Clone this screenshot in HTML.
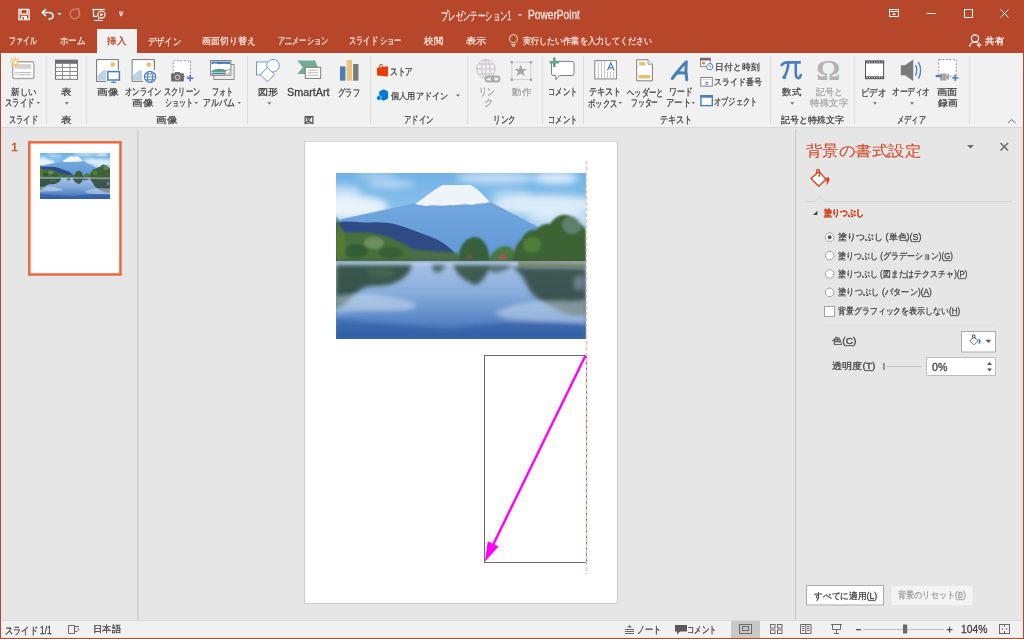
<!DOCTYPE html>
<html><head><meta charset="utf-8">
<style>
html,body{margin:0;padding:0;width:1024px;height:639px;overflow:hidden;background:#E6E6E6}
body{font-family:"Liberation Sans",sans-serif;position:relative}
.b{position:absolute}
.t{position:absolute;white-space:nowrap;transform-origin:0 0;-webkit-text-stroke:0.3px currentColor}
svg.ov{position:absolute;left:0;top:0}
</style></head><body>
<svg class="ov" width="1024" height="639" viewBox="0 0 1024 639">
<defs>
<filter id="bl1" x="-20%" y="-20%" width="140%" height="140%"><feGaussianBlur stdDeviation="1"/></filter>
<filter id="bl2" x="-30%" y="-30%" width="160%" height="160%"><feGaussianBlur stdDeviation="2"/></filter>
<filter id="bl3" x="-30%" y="-30%" width="160%" height="160%"><feGaussianBlur stdDeviation="3.5"/></filter>
<filter id="bl05"><feGaussianBlur stdDeviation="0.6"/></filter>
<linearGradient id="sky" x1="0" y1="0" x2="0" y2="1">
<stop offset="0" stop-color="#70B2E7"/><stop offset="0.5" stop-color="#90C3EC"/><stop offset="1" stop-color="#B2D4F0"/>
</linearGradient>
<linearGradient id="fuji" x1="0" y1="0" x2="0" y2="1">
<stop offset="0" stop-color="#78ACE0"/><stop offset="1" stop-color="#5E97D6"/>
</linearGradient>
<linearGradient id="water" x1="0" y1="0" x2="0" y2="1">
<stop offset="0" stop-color="#A8C3E7"/><stop offset="0.4" stop-color="#8AADDC"/><stop offset="0.72" stop-color="#5E8BC9"/><stop offset="1" stop-color="#3A67AE"/>
</linearGradient>
<clipPath id="pc"><rect x="0" y="0" width="250" height="166"/></clipPath>
<g id="photo" clip-path="url(#pc)">
<rect x="0" y="0" width="250" height="92" fill="url(#sky)"/>
<g filter="url(#bl3)" fill="#fff">
<ellipse cx="12" cy="34" rx="40" ry="12" opacity="0.8"/>
<ellipse cx="5" cy="18" rx="20" ry="6" opacity="0.5"/>
<ellipse cx="55" cy="11" rx="24" ry="3" opacity="0.6"/>
<ellipse cx="40" cy="3" rx="20" ry="2.5" opacity="0.5"/>
<ellipse cx="160" cy="5" rx="40" ry="6" opacity="0.55"/>
<ellipse cx="220" cy="5" rx="22" ry="6" opacity="0.75"/>
<ellipse cx="210" cy="32" rx="55" ry="10" opacity="0.7"/>
<ellipse cx="225" cy="46" rx="35" ry="6" opacity="0.55"/>
<ellipse cx="175" cy="22" rx="20" ry="5" opacity="0.4"/>
</g>
<path d="M0,49 L6,46 L80,30 C92,22 100,15 107,12.5 L135,12.5 C142,16 148,23 153,28.6 C168,36 190,48 210,58 L250,72 L250,92 L0,92 Z" fill="url(#fuji)" filter="url(#bl05)"/>
<path d="M79,31 C92,22 100,15 107,12 L135,12 C142,16 148,23 154,29 C148,31 142,30 136,32 C128,30 122,33 114,32 C106,34 98,31 90,33 C86,32 82,32 79,31 Z" fill="#EFF4F9" filter="url(#bl05)"/>
<path d="M0,50 L7,48.5 C15,48 25,49.5 35,49.5 C45,49 52,50 58,51 C70,54 85,60 100,66 C108,70 113,74 118,79 L118,92 L0,92 Z" fill="#2E4C86" filter="url(#bl05)"/>
<g filter="url(#bl1)">
<path d="M0,43 C3,48 5,54 7,59 C15,60 28,59 36,60 C42,61 46,62 49,63 C56,65 62,68 66,70 C70,72 74,74 77,76.5 L100,78.5 L100,91 L0,91 Z" fill="#46703C"/>
<ellipse cx="38" cy="70" rx="10" ry="6" fill="#8FAA78" opacity="0.55"/>
<ellipse cx="20" cy="78" rx="12" ry="7" fill="#2F5530" opacity="0.7"/>
<ellipse cx="55" cy="80" rx="12" ry="6" fill="#2E5232" opacity="0.6"/>
<ellipse cx="4" cy="72" rx="6" ry="16" fill="#5E7E38" opacity="0.7"/>
<path d="M72,80 C85,78 105,78 122,80 L122,91 L72,91 Z" fill="#4A6E48"/>
<path d="M122,90 C122,76 128,65 138,64 C148,64 153,74 154,90 Z" fill="#35603A"/>
<path d="M152,90 C154,80 162,73 170,73 C177,73 180,82 180,90 Z" fill="#4B7744"/>
<path d="M176,92 C177,80 180,70 186,66 C188,60 194,56 200,57 C204,52 210,50 214,51 C218,45 224,41 230,42 C236,42 241,46 243,50 C247,52 250,56 250,60 L250,94 Z" fill="#3D6434"/>
<ellipse cx="196" cy="72" rx="9" ry="8" fill="#5E8A3A" opacity="0.6"/>
<ellipse cx="236" cy="52" rx="10" ry="9" fill="#7F9DA0" opacity="0.5"/>
<ellipse cx="167" cy="84" rx="3" ry="2.5" fill="#B44A55"/>
<ellipse cx="133" cy="84" rx="3" ry="2" fill="#A85050" opacity="0.6"/>
</g>
<rect x="0" y="88" width="250" height="78" fill="url(#water)"/>
<g filter="url(#bl1)">
<rect x="0" y="87" width="250" height="1.5" fill="#3A5536" opacity="0.7"/>
<path d="M0,89 L182,89 L182,92.5 L0,92.5 Z" fill="#C2D5EC" opacity="0.55"/>
<path d="M182,89 L250,90 L250,95 L182,94 Z" fill="#7A8A55" opacity="0.8"/>
</g>
<g filter="url(#bl2)">
<path d="M0,92 L76,92 C74,100 68,106 58,110 C48,114 40,112 30,114 C20,118 14,126 6,134 L0,136 Z" fill="#2F4A3C" opacity="0.9"/>
<ellipse cx="45" cy="100" rx="14" ry="5" fill="#4D6E4C" opacity="0.6"/>
<path d="M96,92 L110,92 C108,96 104,100 100,100 C97,98 96,95 96,92 Z" fill="#3A5448" opacity="0.8"/>
<path d="M117,92 L154,92 C152,100 148,108 140,112 C132,110 124,104 120,98 Z" fill="#2E4A3A" opacity="0.85"/>
<path d="M176,94 L250,95 L250,142 C240,144 232,142 224,138 C212,132 200,126 194,118 C190,110 186,100 176,94 Z" fill="#2D4738" opacity="0.85"/>
<ellipse cx="243" cy="110" rx="5" ry="7" fill="#9FB6D2" opacity="0.45"/>
<path d="M150,92 L176,92 C172,97 166,99 158,100 C154,98 151,96 150,92 Z" fill="#33503E" opacity="0.7"/>
</g>
<g filter="url(#bl2)">
<path d="M0,123 C25,119 50,121 75,129 C85,133 80,137 60,138 C35,139 15,137 0,141 Z" fill="#DCE8F4" opacity="0.45"/>
<path d="M158,140 C175,130 205,126 235,128 L250,127 L250,150 C230,150 200,148 170,146 Z" fill="#DCE8F4" opacity="0.45"/>
<path d="M0,146 C40,150 90,154 117,156 C150,150 200,146 250,150 L250,166 L0,166 Z" fill="#2A569E" opacity="0.55"/>
</g>
</g>
</defs>
<!-- backgrounds -->
<rect x="0" y="0" width="1024" height="53" fill="#B7472A"/>
<rect x="97" y="29" width="40" height="24" fill="#F1F1F1"/>
<rect x="0" y="53" width="1024" height="74" fill="#F1F1F1"/>
<rect x="0" y="127" width="1024" height="1" fill="#D8D8D8"/>
<rect x="0" y="620" width="1024" height="1" fill="#DADADA"/>
<rect x="0" y="621" width="1024" height="17" fill="#F1F1F1"/>
<rect x="0" y="638" width="1024" height="1" fill="#B7472A"/>
<rect x="0" y="0" width="1" height="639" fill="#B7472A"/>
<rect x="1023" y="0" width="1" height="639" fill="#B7472A"/>

<!-- QAT icons -->
<g fill="none" stroke="#FFFFFF" stroke-width="1.3">
<path d="M19,9.3 H28.6 L29.1,9.8 V19.5 H19 Z"/>
<path d="M20.9,9.5 V14.1 H27.2 V9.5"/>
</g>
<rect x="21.2" y="15.8" width="5.8" height="3.8" fill="#fff"/>
<rect x="22.4" y="17.2" width="1.7" height="2.4" fill="#B7472A"/>
<g fill="none" stroke="#FFFFFF" stroke-width="1.6" stroke-linecap="round">
<path d="M43,12.5 H48.5 C51.5,12.5 53,14 53,16 C53,18 51.5,19 49,19"/>
<path d="M45.5,9.5 L42.3,12.5 L45.5,15.5"/>
</g>
<path d="M57.5,13 H61.5 L59.5,15.3 Z" fill="#fff"/>
<g fill="none" stroke="#FFFFFF" stroke-width="1.5" opacity="0.3">
<path d="M78.5,11 A4.8,4.8 0 1 1 74.6,9.2"/>
<path d="M74.5,9 H78.8 V13"/>
</g>
<g fill="none" stroke="#FFFFFF" stroke-width="1.2">
<path d="M92,9.5 H105"/>
<path d="M93.5,10 V16.3 H97"/>
<circle cx="101.4" cy="14.6" r="3.6"/>
<path d="M98.5,18 L98.5,19.5 M94,20.5 H103"/>
</g>
<path d="M100.3,12.8 L103.2,14.6 L100.3,16.4 Z" fill="#fff"/>
<rect x="119" y="11.6" width="4.3" height="1" fill="#fff"/>
<path d="M119,13.6 H123.3 L121.15,16.6 Z" fill="#fff"/>
<!-- window controls -->
<g fill="none" stroke="#FFFFFF" stroke-width="1">
<rect x="889.5" y="9.5" width="9" height="7"/>
<path d="M890,11.5 H898"/>
<path d="M926.5,13.5 H935.5"/>
<rect x="964.5" y="9.5" width="8" height="8"/>
<path d="M1000.5,9.5 L1008.5,17.5 M1008.5,9.5 L1000.5,17.5"/>
</g>
<path d="M892,15 L894,12.5 L896,15 Z" fill="#fff"/>
<g fill="none" stroke="#FFFFFF" stroke-width="1.2">
<circle cx="975" cy="38.5" r="3.6"/>
<path d="M969.5,47 C970,43.5 972,42 975,42 C976,42 977,42.2 977.8,42.6"/>
<path d="M979,42.5 V47.5 M976.5,45 H981.5"/>
</g>
<!-- bulb -->
<g fill="none" stroke="#F6E3DE" stroke-width="1">
<path d="M511,42.5 C510,41 509.5,40 509.5,38.5 A3.9,3.9 0 0 1 517.3,38.5 C517.3,40 516.8,41 515.8,42.5 Z"/>
<path d="M511.3,44.5 H515.5 M511.8,46 H515"/>
</g>

<!-- ribbon separators -->
<g fill="#DCDCDC">
<rect x="46" y="56" width="1" height="68"/><rect x="86" y="56" width="1" height="68"/>
<rect x="247" y="56" width="1" height="68"/><rect x="370" y="56" width="1" height="68"/>
<rect x="467" y="56" width="1" height="68"/><rect x="542" y="56" width="1" height="68"/>
<rect x="583" y="56" width="1" height="68"/><rect x="770" y="56" width="1" height="68"/>
<rect x="854" y="56" width="1" height="68"/><rect x="969" y="56" width="1" height="68"/>
</g>
<!-- dropdown arrows -->
<g fill="#6A6A6A">
<path d="M36.5,102 H40 L38.25,104 Z"/>
<path d="M64.8,102.3 H68.8 L66.8,104.5 Z"/>
<path d="M194.5,102 H198 L196.25,104 Z"/>
<path d="M237.5,102 H241 L239.25,104 Z"/>
<path d="M267.3,102.3 H271.3 L269.3,104.5 Z"/>
<path d="M456,94.5 H460 L458,96.8 Z"/>
<path d="M618.5,102 H622 L620.25,104 Z"/>
<path d="M691.5,102 H695 L693.25,104 Z"/>
<path d="M790.2,102.3 H794.2 L792.2,104.5 Z"/>
<path d="M873,102.3 H877 L875,104.5 Z"/>
<path d="M910,102.3 H914 L912,104.5 Z"/>
</g>
<path d="M1008,123 L1011.75,119.5 L1015.5,123" fill="none" stroke="#6A6A6A" stroke-width="1"/>

<!-- new slide icon -->
<rect x="12.7" y="61.7" width="21.2" height="16.8" rx="1.5" fill="#fff" stroke="#A8A8A8" stroke-width="1.4"/>
<rect x="15.2" y="64.1" width="16" height="4.7" fill="#D2D2D2"/>
<g stroke="#A8A8A8" stroke-width="0.8"><path d="M15,72.5 H17 M18,72.5 H31 M15,74.7 H17 M18,74.7 H31"/></g>
<g stroke="#EBC06A" stroke-width="1.3"><path d="M15,57 V67.4 M9.8,62.2 H20.2 M11.3,58.5 L18.7,65.9 M18.7,58.5 L11.3,65.9"/></g>
<circle cx="15" cy="62.2" r="2.2" fill="#fff" stroke="#EBC06A" stroke-width="1"/>
<!-- table icon -->
<rect x="55.5" y="60.3" width="22" height="19" fill="#fff" stroke="#747474" stroke-width="1"/>
<rect x="55" y="59.8" width="23" height="4" fill="#6D6D6D"/>
<g stroke="#8A8A8A" stroke-width="1"><path d="M55.5,67.5 H77.5 M55.5,71.5 H77.5 M55.5,75.5 H77.5 M62.5,64 V79.5 M70,64 V79.5"/></g>

<!-- picture icon -->
<path d="M118.3,70 V59.6 H96.6 V81.4 H106" fill="#fff" stroke="#7F7F7F" stroke-width="1"/>
<rect x="97" y="60" width="21" height="11" fill="#fff"/>
<rect x="97.1" y="60.1" width="10" height="20.8" fill="#fff"/>
<path d="M96.6,59.6 H118.3 V70" fill="none" stroke="#7F7F7F" stroke-width="1"/>
<path d="M96.6,59.6 V81.4 H106" fill="none" stroke="#7F7F7F" stroke-width="1"/>
<circle cx="112.7" cy="64.6" r="2.3" fill="#EBC06A"/>
<path d="M97.5,80.5 V75.5 L103.5,70 L106,70.5 V80.5 Z" fill="#BDD1E7"/>
<rect x="107.8" y="71.6" width="11.6" height="8.4" fill="#fff" stroke="#4A7EBB" stroke-width="1.5"/>
<path d="M113.5,80.5 V82 M111,82.5 H116" stroke="#4A7EBB" stroke-width="1.2"/>
<!-- online picture icon -->
<path d="M132.1,59.6 H154.3 V70" fill="#fff" stroke="#7F7F7F" stroke-width="1"/>
<rect x="132.6" y="60.1" width="21.2" height="21.2" fill="#fff"/>
<path d="M132.1,59.6 H154.3 V70 M132.1,59.6 V81.4 H143" fill="none" stroke="#7F7F7F" stroke-width="1"/>
<circle cx="148.8" cy="64.6" r="2.3" fill="#EBC06A"/>
<path d="M133,80.5 V75.5 L139,70 L142,70.5 V80.5 Z" fill="#BDD1E7"/>
<circle cx="150" cy="76.9" r="5.6" fill="#fff" stroke="#4A7EBB" stroke-width="1.2"/>
<g fill="none" stroke="#4A7EBB" stroke-width="1"><ellipse cx="150" cy="76.9" rx="2.6" ry="5.6"/><path d="M144.4,76.9 H155.6 M145.2,74 H154.8 M145.2,79.8 H154.8"/></g>
<!-- screenshot icon -->
<rect x="173.3" y="60.8" width="17.2" height="16" fill="#fff" stroke="#8C8C8C" stroke-width="0.9" stroke-dasharray="2 1.5"/>
<rect x="171.1" y="73.3" width="12.8" height="8.1" rx="0.8" fill="#6D6D6D"/>
<rect x="175" y="72" width="5" height="2" fill="#6D6D6D"/>
<circle cx="177.5" cy="77.3" r="2.3" fill="none" stroke="#E0E0E0" stroke-width="0.9"/>
<path d="M190.2,74.8 V81.6 M186.8,78.2 H193.6" stroke="#4A7EBB" stroke-width="1.6"/>
<!-- photo album -->
<rect x="213.9" y="64.5" width="20.2" height="15" fill="#EDEDED" stroke="#8A8A8A" stroke-width="1"/>
<rect x="210.6" y="60.5" width="20.3" height="14.8" fill="#fff" stroke="#7F7F7F" stroke-width="1"/>
<rect x="211.5" y="61.5" width="18.5" height="3" fill="#4A7EBB"/>
<path d="M211.5,64.5 C214,63 217,63.5 219,64.5 C222,63.5 226,63.5 230,64.5 V70 H211.5 Z" fill="#fff"/>
<path d="M211.5,71 C215,68.5 221,68 226,70 L226,72.5 H211.5 Z" fill="#5E9E82"/>
<rect x="211.5" y="73" width="14" height="1.3" fill="#4A7EBB"/>
<path d="M225,75.3 L230.9,69.5 L230.9,75.3 Z" fill="#C8C8C8"/>
<path d="M225,75.3 L225.5,70.5 L230.9,69.5" fill="#fff" stroke="#7F7F7F" stroke-width="0.8"/>

<!-- shapes icon -->
<g fill="#fff" stroke="#6A9BD2" stroke-width="1">
<rect x="256.5" y="62" width="13.5" height="13"/>
<circle cx="273" cy="65.7" r="6.3"/>
<path d="M267.4,67.6 L274.5,74.7 L267.4,81.8 L260.3,74.7 Z"/>
</g>
<!-- smartart -->
<path d="M297.2,60.6 H315 L318,67.3 L315,74.1 H297.2 L302.8,67.3 Z" fill="#70AD94"/>
<rect x="305.3" y="67.3" width="15.4" height="11.1" fill="#fff" stroke="#7F7F7F" stroke-width="1"/>
<g stroke="#9A9A9A" stroke-width="0.7"><path d="M307.5,70.3 H318.5 M307.5,72.8 H318.5 M307.5,75.3 H318.5"/></g>
<!-- chart -->
<rect x="340" y="66.4" width="5.4" height="14.3" fill="#4A7EBB"/>
<rect x="346.6" y="60" width="5.4" height="20.7" fill="#EBC37A"/>
<rect x="353.1" y="64" width="5.3" height="16.7" fill="#7A7A7A"/>

<!-- store -->
<path d="M377,67.8 L388,66.2 V76.4 L377,75.6 Z" fill="#EB3C00"/>
<path d="M379.5,67.5 V65.5 C379.5,64 382.5,64 382.5,65.5 V67" fill="none" stroke="#EB3C00" stroke-width="1"/>
<!-- addin -->
<path d="M383.6,89.3 L388,91.5 V98.6 L383.6,100.8 L379.2,98.6 V91.5 Z" fill="#0078D7"/>
<circle cx="378.9" cy="98" r="2.4" fill="#0078D7" stroke="#F1F1F1" stroke-width="0.6"/>

<!-- link globe -->
<circle cx="485.9" cy="69" r="9.3" fill="#F4EEF4" stroke="#C4C4C4" stroke-width="1"/>
<g fill="none" stroke="#C4C4C4" stroke-width="1"><ellipse cx="485.9" cy="69" rx="4.2" ry="9.3"/><path d="M476.6,69 H495.2 M478,64 H493.8 M478,74 H493.8 M485.9,59.7 V78.3"/></g>
<g fill="none" stroke="#A8A8A8" stroke-width="1.8"><rect x="485.5" y="76.5" width="8" height="5" rx="2.5"/><rect x="491.5" y="76.5" width="8" height="5" rx="2.5"/></g>
<!-- action -->
<rect x="511.9" y="62.2" width="19" height="17.5" fill="none" stroke="#C8C8C8" stroke-width="0.8"/>
<g fill="#A0A0A0"><rect x="510.6" y="61" width="2.3" height="2.3"/><rect x="529.8" y="61" width="2.3" height="2.3"/><rect x="510.6" y="78.6" width="2.3" height="2.3"/><rect x="529.8" y="78.6" width="2.3" height="2.3"/></g>
<path d="M520.7,64.5 L522.4,69 L527,69 L523.3,71.8 L524.8,76.3 L520.7,73.5 L516.6,76.3 L518.1,71.8 L514.4,69 L519,69 Z" fill="#A6A6A6"/>
<!-- comment -->
<path d="M553,61.4 H572 Q574,61.4 574,63.4 V73.5 Q574,75.5 572,75.5 H559.5 L555.8,79.8 V75.5 H553 Q551.5,75.5 551.5,73.5 V63.4 Q551.5,61.4 553,61.4 Z" fill="#fff" stroke="#808080" stroke-width="1"/>
<path d="M554.3,57.6 V67.1 M549.6,62.3 H559" stroke="#5FA585" stroke-width="2.6"/>

<!-- textbox -->
<rect x="594.8" y="60.6" width="21.6" height="18.3" fill="#fff" stroke="#808080" stroke-width="1"/>
<g stroke="#BDBDBD" stroke-width="0.9"><path d="M598.3,61 V78.5 M601.5,61 V78.5 M604.7,61 V78.5 M607.5,72 V78.5 M610.5,72 V78.5 M613.5,72 V78.5"/></g>
<path d="M607.5,70.5 L610.8,62.8 L614.1,70.5 M608.8,67.8 H612.8" fill="none" stroke="#4A7EBB" stroke-width="1.2"/>
<!-- header footer -->
<path d="M636.7,59.8 H648 L652.4,64.2 V80.8 H636.7 Z" fill="#fff" stroke="#7F7F7F" stroke-width="1"/>
<path d="M648,59.8 V64.2 H652.4" fill="#F2F2F2" stroke="#7F7F7F" stroke-width="0.8"/>
<rect x="639" y="62" width="6.2" height="3.5" fill="#EBC06A"/>
<rect x="638.6" y="75" width="11.5" height="3.5" fill="#EBC06A"/>
<!-- wordart -->
<path d="M672.3,78.5 Q680,68 686.3,61.8 Q685.2,71 686.8,79.8 M677,73.2 Q681,72.2 686,73.2" fill="none" stroke="#4A7EBB" stroke-width="3" stroke-linejoin="round" stroke-linecap="round"/>
<!-- date -->
<rect x="700.5" y="58.2" width="9.8" height="8.4" fill="#fff" stroke="#7F7F7F" stroke-width="0.9"/>
<rect x="700.2" y="58" width="10.3" height="2.5" fill="#6D6D6D"/>
<rect x="702" y="62" width="3" height="2.5" fill="#ED7D31"/>
<circle cx="709.7" cy="66.6" r="3.1" fill="#fff" stroke="#4A7EBB" stroke-width="1"/>
<path d="M709.7,64.8 V66.8 H711.2" fill="none" stroke="#6D6D6D" stroke-width="0.7"/>
<!-- slide number -->
<rect x="700.8" y="77.5" width="11.5" height="8.7" fill="#fff" stroke="#808080" stroke-width="1"/>
<path d="M702,79.5 H711" stroke="#BDBDBD" stroke-width="0.6"/>
<path d="M705.3,82.3 H708.5 M705.3,84.2 H708.5" stroke="#4A7EBB" stroke-width="1"/>
<!-- object -->
<rect x="700.9" y="95.8" width="11.4" height="9.8" fill="#fff" stroke="#4A7EBB" stroke-width="1.4"/>
<rect x="700.2" y="95.1" width="12.7" height="2.6" fill="#4A7EBB"/>

<!-- pi / omega -->
<g fill="none" stroke="#4A7EBB" stroke-linecap="butt">
<path d="M781.3,66 Q782.8,62.3 787.5,62.3 H800.8" stroke-width="2.7"/>
<path d="M788.3,63 Q787.8,71.5 784,77.5" stroke-width="2.7"/>
<path d="M795.8,63 V74 Q795.8,78.2 798.3,78.2 Q800.3,78.2 801,74" stroke-width="2.5"/>
</g>
<circle cx="784.3" cy="77.2" r="1.9" fill="#4A7EBB"/>
<text x="816.3" y="79.6" font-family="Liberation Serif" font-size="30" font-weight="bold" fill="#B4B4B4">Ω</text>
<!-- video -->
<rect x="865.5" y="61.1" width="18.1" height="17.5" fill="#fff" stroke="#555" stroke-width="1"/>
<rect x="865" y="60.6" width="19.1" height="2.8" fill="#555"/>
<rect x="865" y="76.3" width="19.1" height="2.8" fill="#555"/>
<g fill="#fff"><rect x="866.5" y="61.5" width="1" height="1"/><rect x="869" y="61.5" width="1" height="1"/><rect x="871.5" y="61.5" width="1" height="1"/><rect x="874" y="61.5" width="1" height="1"/><rect x="876.5" y="61.5" width="1" height="1"/><rect x="879" y="61.5" width="1" height="1"/><rect x="881.5" y="61.5" width="1" height="1"/>
<rect x="866.5" y="77.2" width="1" height="1"/><rect x="869" y="77.2" width="1" height="1"/><rect x="871.5" y="77.2" width="1" height="1"/><rect x="874" y="77.2" width="1" height="1"/><rect x="876.5" y="77.2" width="1" height="1"/><rect x="879" y="77.2" width="1" height="1"/><rect x="881.5" y="77.2" width="1" height="1"/></g>
<!-- audio -->
<path d="M900.8,65.3 H905 L913.2,59.6 V81 L905,75.3 H900.8 Z" fill="#7A7A7A"/>
<path d="M915.5,65 Q918,70.3 915.5,75.6 M918.5,62 Q922.8,70.3 918.5,78.6" fill="none" stroke="#4A7EBB" stroke-width="1.3"/>
<!-- screen recording -->
<rect x="938.8" y="59.5" width="17.4" height="16.6" fill="#fff" stroke="#8C8C8C" stroke-width="0.9" stroke-dasharray="2 1.5"/>
<rect x="940" y="73.5" width="6.5" height="7" fill="#A6A6A6"/>
<path d="M946.5,75 L949,73.5 V80 L946.5,78.5 Z" fill="#A6A6A6"/>
<rect x="935.7" y="75" width="5.5" height="2.2" fill="#4A7EBB"/>
<path d="M955.3,74.8 V81 M952.2,77.9 H958.4" stroke="#4A7EBB" stroke-width="1.5"/>

<!-- left panel -->
<rect x="137" y="130" width="1" height="490" fill="#D0D0D0"/><rect x="138" y="130" width="1" height="490" fill="#D7D7D7"/>
<rect x="29.3" y="142.3" width="91.2" height="132.2" fill="#fff" stroke="#EE6D47" stroke-width="2.6"/>
<use href="#photo" transform="translate(40,153) scale(0.28,0.277)"/>
<!-- slide -->
<rect x="304.5" y="141.5" width="313" height="462" fill="#fff" stroke="#CBCBCB" stroke-width="1"/>
<rect x="305" y="141" width="313" height="1" fill="#D8D8D8"/>
<use href="#photo" transform="translate(336,173)"/>
<rect x="484.5" y="355.5" width="102" height="207" fill="none" stroke="#6B6B6B" stroke-width="1"/>
<line x1="586.5" y1="161" x2="586.5" y2="574" stroke="#EBC3B7" stroke-width="1.6" stroke-dasharray="4 1.8"/>
<line x1="585.3" y1="356" x2="493" y2="545" stroke="#FF00FF" stroke-width="2.4"/>
<polygon points="484.8,561.8 487.8,541.3 498.6,546.6" fill="#FF00FF"/>

<!-- pane -->
<rect x="795" y="129" width="1" height="491" fill="#C8C8C8"/>
<path d="M967,145 H974 L970.5,148.5 Z" fill="#6A6A6A"/>
<path d="M1000.5,143 L1008,150.5 M1008,143 L1000.5,150.5" stroke="#6A6A6A" stroke-width="1.5"/>
<!-- bucket -->
<path d="M811,178.5 L819.1,171.4 L825.9,179.2 L818.8,186.2 Z" fill="#fff" stroke="#D24726" stroke-width="1.4" stroke-linejoin="round"/>
<path d="M816.5,173.5 V170.3 Q818,168.5 819.5,170.3 V175.5" fill="none" stroke="#D24726" stroke-width="1.1"/>
<circle cx="819.3" cy="175.8" r="1" fill="#D24726"/>
<path d="M825.5,178.8 C827,176.5 829,176.8 829.5,179 C830,181 828,183 826.5,185 C827,182.5 826.5,180.5 825.5,178.8 Z" fill="#D24726"/>
<!-- divider with notch -->
<path d="M806.5,201.5 H815 L820,196 L825,201.5 H1012" fill="none" stroke="#D2D2D2" stroke-width="1"/>
<path d="M813,215 L817.4,210.8 V215 Z" fill="#444"/>
<!-- radios -->
<g fill="#fff" stroke="#9A9A9A" stroke-width="0.9">
<circle cx="829.6" cy="237.2" r="4.3"/><circle cx="829.6" cy="255.6" r="4.3"/><circle cx="829.6" cy="274" r="4.3"/><circle cx="829.6" cy="292.4" r="4.3"/>
</g>
<circle cx="829.6" cy="237.2" r="2" fill="#555"/>
<rect x="824.5" y="306.5" width="10" height="10" fill="#fff" stroke="#9A9A9A" stroke-width="0.9"/>
<rect x="824" y="324.5" width="173" height="1" fill="#DEDEDE"/>
<!-- color btn -->
<rect x="961.5" y="331.5" width="34" height="20.5" fill="#fff" stroke="#ACACAC" stroke-width="1"/>
<path d="M969.8,341 L973.8,336.8 L978.2,340.8 L974,344.8 Z" fill="#fff" stroke="#666" stroke-width="0.9"/>
<path d="M972.6,338.5 V335 H975 V339" fill="none" stroke="#555" stroke-width="0.9"/>
<path d="M978,338.5 C980.5,339 981.3,341 980.5,342.5 C980,343.5 979,344 978.3,344.3 C979,342.5 979,340.5 978,338.5 Z" fill="#4A7EBB"/>
<path d="M985.6,339.8 H991.1 L988.35,343.1 Z" fill="#555"/>
<!-- slider -->
<rect x="883.3" y="363" width="1.3" height="7" fill="#666"/>
<rect x="884" y="366" width="37.5" height="1" fill="#C6C6C6"/>
<!-- spinner -->
<rect x="926.5" y="357.5" width="69" height="18" fill="#fff" stroke="#BDBDBD" stroke-width="1"/>
<path d="M987,365 L989.5,362 L992,365 Z M987,368.5 H992 L989.5,371.5 Z" fill="#555"/>
<!-- buttons -->
<rect x="806.5" y="585.5" width="77" height="19.5" fill="#FDFDFD" stroke="#ADADAD" stroke-width="1"/>
<rect x="891.5" y="586" width="81" height="19" fill="#F3F3F3"/>

<!-- status icons -->
<g fill="none" stroke="#6A6A6A" stroke-width="1">
<path d="M68.5,625.5 H74.5 V633.5 H68.5 Z M74.5,626.5 H79 M74.5,631.5 H77"/>
<path d="M77,627.5 L79,629.5 L77,631.5"/>
</g>
<g stroke="#6A6A6A" stroke-width="1"><path d="M625,629.5 H634 M625,631.5 H634 M625,633.5 H634"/></g>
<path d="M627,627.5 L629.5,625 L632,627.5 Z" fill="#6A6A6A"/>
<path d="M675,625 H687 V631.5 H680 L677,634.5 V631.5 H675 Z" fill="#5A5A5A"/>
<rect x="731" y="621" width="29" height="17" fill="#C8C8C8"/>
<g fill="none" stroke="#6A6A6A" stroke-width="1">
<rect x="739.5" y="624.5" width="12" height="9"/><rect x="742.5" y="626.5" width="6" height="4"/>
<rect x="770.5" y="624.5" width="4.5" height="3.5"/><rect x="777.5" y="624.5" width="4.5" height="3.5"/><rect x="770.5" y="630" width="4.5" height="3.5"/><rect x="777.5" y="630" width="4.5" height="3.5"/>
<path d="M800.5,624.5 H811 V633.5 H800.5 Z M805.75,624.5 V633.5 M802,626.5 H804.5 M802,628.5 H804.5 M807,626.5 H809.5 M807,628.5 H809.5 M802,630.5 H804.5 M807,630.5 H809.5"/>
<path d="M831,624.5 H842 M832.5,624.5 V629.5 H840.5 V624.5 M836.5,629.5 V633 M834,633.5 H839"/>
<rect x="999.5" y="624.5" width="10" height="9"/>
</g>
<g fill="#6A6A6A"><circle cx="1002.5" cy="629" r="0.8"/><circle cx="1006.5" cy="629" r="0.8"/><rect x="1004" y="625" width="1" height="2"/><rect x="1004" y="631" width="1" height="2"/></g>
<rect x="856" y="629" width="5" height="1.3" fill="#555"/>
<rect x="864" y="629" width="80" height="1" fill="#BFBFBF"/>
<rect x="903" y="624.5" width="4.2" height="9" fill="#6A6A6A"/>
<path d="M946.7,629.6 H952.5 M949.6,626.7 V632.5" stroke="#555" stroke-width="1.3"/>
</svg>

<div class="t" style="left:441.39px;top:10.00px;font-size:12px;line-height:12px;color:#F6E3DE;transform:scale(0.6133,1.000)">プレゼンテーション1</div>
<div class="t" style="left:518.30px;top:8.00px;font-size:12px;line-height:12px;color:#F6E3DE;transform:scale(0.9750,1.000)">-</div>
<div class="t" style="left:528.35px;top:9.00px;font-size:12px;line-height:12px;color:#F6E3DE;transform:scale(0.8459,1.000)">PowerPoint</div>
<div class="t" style="left:9.31px;top:36.00px;font-size:10px;line-height:10px;color:#F6E3DE;transform:scale(0.6923,1.000)">ファイル</div>
<div class="t" style="left:59.60px;top:36.00px;font-size:10px;line-height:10px;color:#F6E3DE;transform:scale(0.8414,1.000)">ホーム</div>
<div class="t" style="left:107.40px;top:36.50px;font-size:10px;line-height:10px;color:#B7472A;transform:scale(0.9600,0.910)">挿入</div>
<div class="t" style="left:147.76px;top:37.00px;font-size:10px;line-height:10px;color:#F6E3DE;transform:scale(0.8189,1.000)">デザイン</div>
<div class="t" style="left:202.31px;top:37.00px;font-size:10px;line-height:10px;color:#F6E3DE;transform:scale(0.8931,0.910)">画面切り替え</div>
<div class="t" style="left:277.79px;top:36.00px;font-size:10px;line-height:10px;color:#F6E3DE;transform:scale(0.7132,1.000)">アニメーション</div>
<div class="t" style="left:348.98px;top:36.00px;font-size:10px;line-height:10px;color:#F6E3DE;transform:scale(0.7225,1.000)">スライド ショー</div>
<div class="t" style="left:424.40px;top:36.50px;font-size:10px;line-height:10px;color:#F6E3DE;transform:scale(0.9500,0.910)">校閲</div>
<div class="t" style="left:465.87px;top:36.50px;font-size:10px;line-height:10px;color:#F6E3DE;transform:scale(1.0316,0.910)">表示</div>
<div class="t" style="left:523.20px;top:36.50px;font-size:10px;line-height:10px;color:#F6E3DE;transform:scale(0.8082,0.910)">実行したい作業を入力してください</div>
<div class="t" style="left:985.00px;top:36.50px;font-size:10px;line-height:10px;color:#FFFFFF;transform:scale(0.9500,0.910)">共有</div>
<div class="t" style="left:10.50px;top:87.50px;font-size:10px;line-height:10px;color:#444444;transform:scale(0.8586,0.910)">新しい</div>
<div class="t" style="left:4.66px;top:98.30px;font-size:10px;line-height:10px;color:#444444;transform:scale(0.7395,1.000)">スライド</div>
<div class="t" style="left:8.78px;top:115.00px;font-size:10px;line-height:10px;color:#444444;transform:scale(0.7211,1.000)">スライド</div>
<div class="t" style="left:60.74px;top:87.50px;font-size:10px;line-height:10px;color:#444444;transform:scale(1.0556,0.910)">表</div>
<div class="t" style="left:60.74px;top:116.00px;font-size:10px;line-height:10px;color:#444444;transform:scale(1.0556,0.910)">表</div>
<div class="t" style="left:96.62px;top:87.50px;font-size:10px;line-height:10px;color:#444444;transform:scale(1.0778,0.910)">画像</div>
<div class="t" style="left:124.57px;top:86.50px;font-size:10px;line-height:10px;color:#444444;transform:scale(0.7333,1.000)">オンライン</div>
<div class="t" style="left:132.23px;top:99.30px;font-size:10px;line-height:10px;color:#444444;transform:scale(1.0667,0.910)">画像</div>
<div class="t" style="left:163.78px;top:86.50px;font-size:10px;line-height:10px;color:#444444;transform:scale(0.7188,1.000)">スクリーン</div>
<div class="t" style="left:164.60px;top:98.30px;font-size:10px;line-height:10px;color:#444444;transform:scale(0.7000,1.000)">ショット</div>
<div class="t" style="left:211.88px;top:86.50px;font-size:10px;line-height:10px;color:#444444;transform:scale(0.7185,1.000)">フォト</div>
<div class="t" style="left:203.01px;top:98.30px;font-size:10px;line-height:10px;color:#444444;transform:scale(0.7947,1.000)">アルバム</div>
<div class="t" style="left:156.23px;top:116.00px;font-size:10px;line-height:10px;color:#444444;transform:scale(1.0667,0.910)">画像</div>
<div class="t" style="left:257.98px;top:87.50px;font-size:10px;line-height:10px;color:#444444;transform:scale(1.0222,0.910)">図形</div>
<div class="t" style="left:286.90px;top:87.50px;font-size:10px;line-height:10px;color:#444444;transform:scale(1.0775,1.000)">SmartArt</div>
<div class="t" style="left:338.27px;top:87.50px;font-size:10px;line-height:10px;color:#444444;transform:scale(0.7250,1.000)">グラフ</div>
<div class="t" style="left:303.66px;top:116.00px;font-size:10px;line-height:10px;color:#444444;transform:scale(1.0375,0.910)">図</div>
<div class="t" style="left:390.04px;top:66.50px;font-size:10px;line-height:10px;color:#444444;transform:scale(0.7643,1.000)">ストア</div>
<div class="t" style="left:391.20px;top:91.80px;font-size:10px;line-height:10px;color:#444444;transform:scale(0.8188,0.910)">個人用アドイン</div>
<div class="t" style="left:404.17px;top:115.00px;font-size:10px;line-height:10px;color:#444444;transform:scale(0.7342,1.000)">アドイン</div>
<div class="t" style="left:479.32px;top:86.50px;font-size:10px;line-height:10px;color:#A6A6A6;transform:scale(0.7882,1.000)">リン</div>
<div class="t" style="left:483.54px;top:98.30px;font-size:10px;line-height:10px;color:#A6A6A6;transform:scale(0.9571,1.000)">ク</div>
<div class="t" style="left:512.00px;top:87.50px;font-size:10px;line-height:10px;color:#A6A6A6;transform:scale(0.9500,0.910)">動作</div>
<div class="t" style="left:493.39px;top:115.00px;font-size:10px;line-height:10px;color:#444444;transform:scale(0.7538,1.000)">リンク</div>
<div class="t" style="left:547.87px;top:86.50px;font-size:10px;line-height:10px;color:#444444;transform:scale(0.7270,1.000)">コメント</div>
<div class="t" style="left:547.87px;top:115.00px;font-size:10px;line-height:10px;color:#444444;transform:scale(0.7270,1.000)">コメント</div>
<div class="t" style="left:589.07px;top:86.50px;font-size:10px;line-height:10px;color:#444444;transform:scale(0.8139,1.000)">テキスト</div>
<div class="t" style="left:587.80px;top:99.30px;font-size:10px;line-height:10px;color:#444444;transform:scale(0.7359,1.000)">ボックス</div>
<div class="t" style="left:626.50px;top:87.50px;font-size:10px;line-height:10px;color:#444444;transform:scale(0.7313,1.000)">ヘッダーと</div>
<div class="t" style="left:630.52px;top:98.30px;font-size:10px;line-height:10px;color:#444444;transform:scale(0.6816,1.000)">フッター</div>
<div class="t" style="left:668.72px;top:86.50px;font-size:10px;line-height:10px;color:#444444;transform:scale(0.7786,1.000)">ワード</div>
<div class="t" style="left:666.06px;top:98.30px;font-size:10px;line-height:10px;color:#444444;transform:scale(0.8370,1.000)">アート</div>
<div class="t" style="left:714.81px;top:62.71px;font-size:10px;line-height:10px;color:#444444;transform:scale(0.8898,0.910)">日付と時刻</div>
<div class="t" style="left:714.00px;top:78.40px;font-size:10px;line-height:10px;color:#444444;transform:scale(0.8009,0.910)">スライド番号</div>
<div class="t" style="left:714.08px;top:97.00px;font-size:10px;line-height:10px;color:#444444;transform:scale(0.7193,1.000)">オブジェクト</div>
<div class="t" style="left:660.37px;top:115.00px;font-size:10px;line-height:10px;color:#444444;transform:scale(0.8139,1.000)">テキスト</div>
<div class="t" style="left:781.70px;top:87.50px;font-size:10px;line-height:10px;color:#444444;transform:scale(0.9550,0.910)">数式</div>
<div class="t" style="left:816.40px;top:87.50px;font-size:10px;line-height:10px;color:#A6A6A6;transform:scale(0.9071,0.910)">記号と</div>
<div class="t" style="left:810.00px;top:99.30px;font-size:10px;line-height:10px;color:#A6A6A6;transform:scale(0.9500,0.910)">特殊文字</div>
<div class="t" style="left:780.70px;top:116.00px;font-size:10px;line-height:10px;color:#444444;transform:scale(0.9071,0.910)">記号と特殊文字</div>
<div class="t" style="left:861.03px;top:87.50px;font-size:10px;line-height:10px;color:#444444;transform:scale(0.8333,1.000)">ビデオ</div>
<div class="t" style="left:891.84px;top:86.50px;font-size:10px;line-height:10px;color:#444444;transform:scale(0.7604,1.000)">オーディオ</div>
<div class="t" style="left:936.87px;top:87.50px;font-size:10px;line-height:10px;color:#444444;transform:scale(1.0316,0.910)">画面</div>
<div class="t" style="left:937.90px;top:99.30px;font-size:10px;line-height:10px;color:#444444;transform:scale(0.9800,0.910)">録画</div>
<div class="t" style="left:897.18px;top:115.00px;font-size:10px;line-height:10px;color:#444444;transform:scale(0.7184,1.000)">メディア</div>
<div class="t" style="left:10.75px;top:143.00px;font-size:10px;line-height:10px;color:#D24726;transform:scale(1.2500,1.000)">1</div>
<div class="t" style="left:805.50px;top:143.40px;font-size:15px;line-height:15px;color:#D24726;-webkit-text-stroke:0.05px #D24726;transform:scale(1.0990,1.000)">背景の書式設定</div>
<div class="t" style="left:824.00px;top:209.40px;font-size:10px;line-height:10px;color:#D24726;font-weight:bold;transform:scale(0.7959,0.910)">塗りつぶし</div>
<div class="t" style="left:838.10px;top:233.00px;font-size:10px;line-height:10px;color:#444444;transform:scale(0.9011,0.910)">塗りつぶし (単色)(<u>S</u>)</div>
<div class="t" style="left:838.20px;top:251.70px;font-size:10px;line-height:10px;color:#444444;transform:scale(0.7993,0.910)">塗りつぶし (グラデーション)(<u>G</u>)</div>
<div class="t" style="left:838.20px;top:270.00px;font-size:10px;line-height:10px;color:#444444;transform:scale(0.7950,0.910)">塗りつぶし (図またはテクスチャ)(<u>P</u>)</div>
<div class="t" style="left:838.17px;top:288.30px;font-size:10px;line-height:10px;color:#444444;transform:scale(0.8315,0.910)">塗りつぶし (パターン)(<u>A</u>)</div>
<div class="t" style="left:838.21px;top:306.80px;font-size:10px;line-height:10px;color:#444444;transform:scale(0.7928,0.910)">背景グラフィックを表示しない(<u>H</u>)</div>
<div class="t" style="left:832.00px;top:336.90px;font-size:10px;line-height:10px;color:#444444;transform:scale(1.0261,0.910)">色(<u>C</u>)</div>
<div class="t" style="left:832.00px;top:361.90px;font-size:10px;line-height:10px;color:#444444;transform:scale(1.0143,0.910)">透明度(<u>T</u>)</div>
<div class="t" style="left:932.00px;top:362.50px;font-size:10px;line-height:10px;color:#444;transform:scale(1.0571,1.000)">0%</div>
<div class="t" style="left:813.60px;top:591.71px;font-size:10px;line-height:10px;color:#444444;transform:scale(0.8750,0.910)">すべてに適用(<u>L</u>)</div>
<div class="t" style="left:897.69px;top:590.80px;font-size:10px;line-height:10px;color:#A0A0A0;transform:scale(0.8146,0.910)">背景のリセット(<u>B</u>)</div>
<div class="t" style="left:5.38px;top:625.80px;font-size:10px;line-height:10px;color:#444;transform:scale(0.8200,1.000)">スライド 1/1</div>
<div class="t" style="left:92.76px;top:625.30px;font-size:10px;line-height:10px;color:#444;transform:scale(0.9414,0.910)">日本語</div>
<div class="t" style="left:637.19px;top:624.50px;font-size:10px;line-height:10px;color:#444;transform:scale(0.8148,1.000)">ノート</div>
<div class="t" style="left:687.26px;top:624.50px;font-size:10px;line-height:10px;color:#444;transform:scale(0.7432,1.000)">コメント</div>
<div class="t" style="left:960.97px;top:625.00px;font-size:10px;line-height:10px;color:#444;transform:scale(1.0280,1.000)">104%</div>
</body></html>
